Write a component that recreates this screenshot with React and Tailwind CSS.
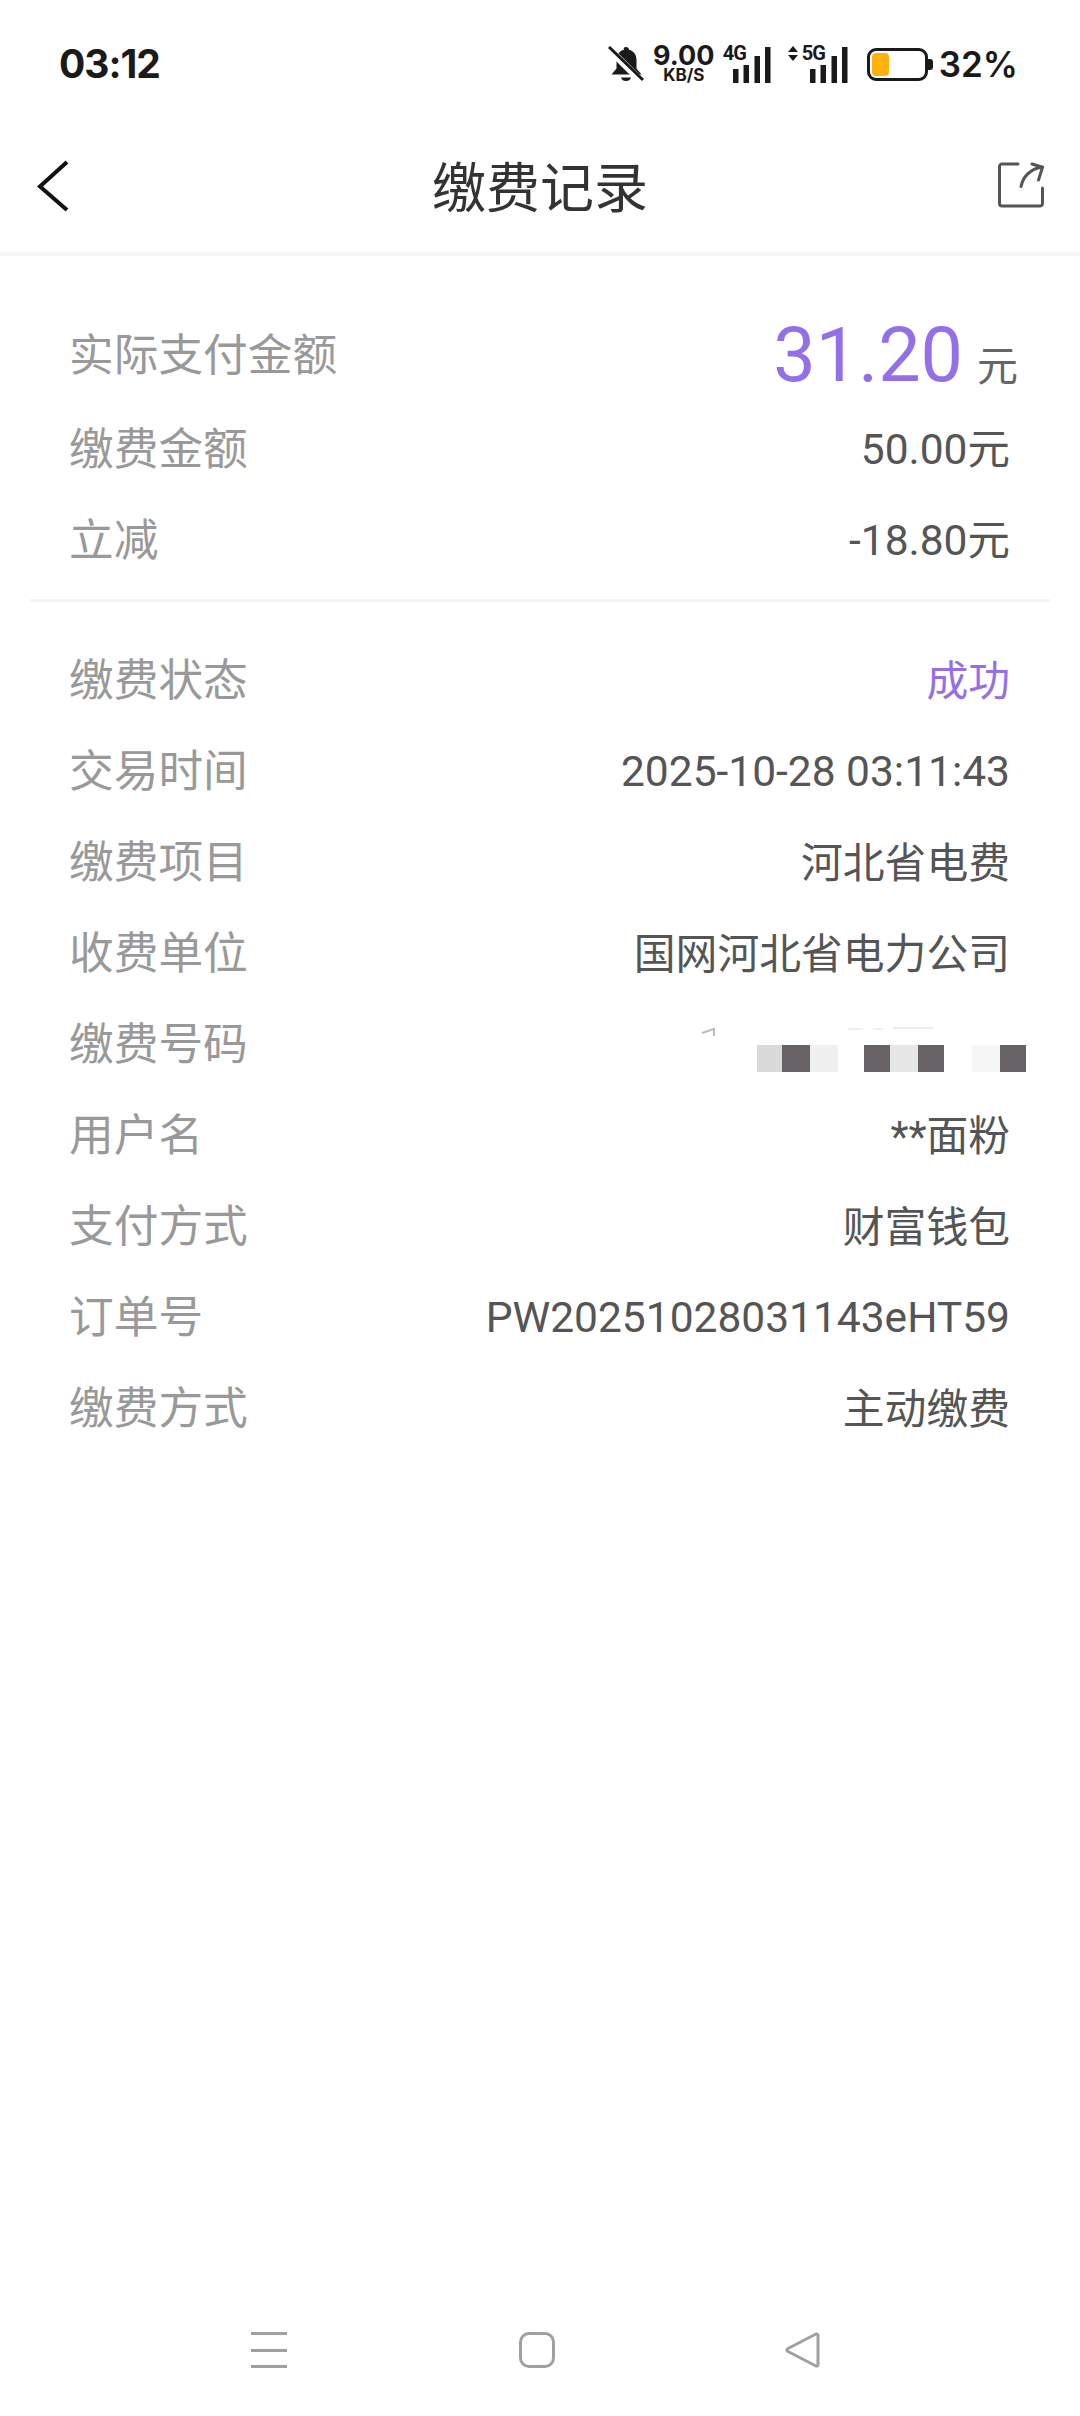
import React from "react";

const CJK = "font-['Roboto','Noto_Sans_CJK_SC',sans-serif]";

const details = [
  { label: "缴费状态", value: "成功", accent: true, han: true },
  { label: "交易时间", value: "2025-10-28 03:11:43" },
  { label: "缴费项目", value: "河北省电费", han: true },
  { label: "收费单位", value: "国网河北省电力公司", han: true },
  { label: "缴费号码", masked: true },
  { label: "用户名", value: "**面粉", han: true },
  { label: "支付方式", value: "财富钱包", han: true },
  { label: "订单号", value: "PW20251028031143eHT59" },
  { label: "缴费方式", value: "主动缴费", han: true },
];

const Signal = ({ className }) => (
  <svg className={className} width="38" height="36" viewBox="0 0 38 36" fill="#1a1a1a">
    <rect x="0" y="22" width="5.500" height="14" />
    <rect x="10.500" y="18" width="5.500" height="18" />
    <rect x="21.500" y="9" width="5.500" height="27" />
    <rect x="32" y="0" width="5.500" height="36" />
  </svg>
);

const StatusBar = () => (
  <div className="flex h-[126px] items-center justify-between pl-[59px] pr-[62px]">
    <span className="font-['Inter',sans-serif] text-[39px] font-bold leading-none tracking-[-1px] text-[#1a1a1a]">03:12</span>
    <div className="flex items-center pt-[2px]">
      <svg width="36" height="36" viewBox="0 0 36 36">
        <path d="M18 1c1.800 0 3 1.200 3 2.800 5 1.300 7.500 5.200 7.500 10.200v8.500l5 6H3.500l5-6V14c0-5 2.500-8.900 7.500-10.200C15 2.200 16.200 1 18 1z" fill="#1a1a1a" />
        <path d="M13 31.500h10q-1 3.500-5 3.500t-5-3.500z" fill="#1a1a1a" />
        <path d="M1 3l33 33" stroke="#fff" strokeWidth="7" />
        <path d="M1 1l34 33" stroke="#1a1a1a" strokeWidth="3" />
      </svg>
      <div className="ml-[10px] flex w-[60px] flex-col items-center font-['Inter',sans-serif] font-bold text-[#1a1a1a]">
        <span className="text-[27px] leading-[22px]">9.00</span>
        <span className="text-[17px] leading-[16px]">KB/S</span>
      </div>
      <div className="relative ml-[9px] h-[38px] w-[48px]">
        <span className="absolute left-0 top-0 font-['Roboto',sans-serif] text-[20px] font-bold leading-[16px] tracking-[-1px] text-[#1a1a1a]">4G</span>
        <Signal className="absolute bottom-0 right-0" />
      </div>
      <div className="relative ml-[17px] h-[38px] w-[60px]">
        <svg className="absolute left-0 top-[1px]" width="10" height="15" viewBox="0 0 10 15" fill="#1a1a1a">
          <path d="M5 0l5 6H0z" />
          <path d="M5 15l5-6H0z" />
        </svg>
        <span className="absolute left-[14px] top-0 font-['Roboto',sans-serif] text-[20px] font-bold leading-[16px] tracking-[-1px] text-[#1a1a1a]">5G</span>
        <Signal className="absolute bottom-0 right-0" />
      </div>
      <div className="ml-[19px] flex items-center">
        <div className="h-[33px] w-[61px] rounded-[9px] border-[3px] border-[#1a1a1a] p-[2px]">
          <div className="h-full w-[17px] rounded-[4px] bg-[#fdb10b]" />
        </div>
        <div className="h-[11px] w-[5px] rounded-r-[3px] bg-[#1a1a1a]" />
      </div>
      <span className="ml-[6px] font-['Inter',sans-serif] text-[35px] font-semibold leading-none text-[#1a1a1a]">32%</span>
    </div>
  </div>
);

const Header = () => (
  <div className="relative flex h-[130px] items-center justify-center border-b-[4px] border-[#f6f6f6]">
    <svg className="absolute left-[36px] top-[34px]" width="34" height="52" viewBox="0 0 34 52" fill="none">
      <path d="M31 2L4 26.500 31 50" stroke="#111" strokeWidth="4" />
    </svg>
    <h1 className={`${CJK} pt-[2px] text-[54px] font-normal leading-none text-[#333]`}>缴费记录</h1>
    <svg className="absolute left-[998px] top-[36px]" width="46" height="46" viewBox="0 0 46 46" fill="none" stroke="#555" strokeWidth="3" strokeLinecap="round" strokeLinejoin="round">
      <path d="M20 2H4a2.500 2.500 0 0 0-2.500 2.500v37A2.500 2.500 0 0 0 4 44h38a2.500 2.500 0 0 0 2.500-2.500V26" />
      <path d="M23 24.500C25 15 32 7 44 5" />
      <path d="M34 2l10.500 3.300L40.500 18" />
    </svg>
  </div>
);

const Row = ({ label, children, valueClass = "text-[42.500px] text-[#555]" }) => (
  <div className={`${CJK} flex h-[91px] items-center justify-between pl-[69px] pr-[70px]`}>
    <span className="text-[44.700px] leading-none text-[#999]">{label}</span>
    <span className={`leading-none ${valueClass}`}>{children}</span>
  </div>
);

// account number is blurred out with mosaic blocks
const MaskedNumber = () => (
  <div className="relative mr-[-16px] mt-[26px] flex h-[27px]">
    <svg className="absolute left-[-56px] top-[-18px]" width="240" height="10" viewBox="0 0 240 10" fill="none">
      <path d="M1 6l12-4v7" stroke="#bbb" strokeWidth="2" />
      <path d="M147 2h15M172 2h10M192 1h40" stroke="#eee" strokeWidth="2" />
    </svg>
    <div className="w-[25px] bg-[#dadada]" />
    <div className="w-[28px] bg-[#666266]" />
    <div className="w-[28px] bg-[#f0f0f0]" />
    <div className="w-[26px]" />
    <div className="w-[26px] bg-[#666266]" />
    <div className="w-[28px] bg-[#e6e6e6]" />
    <div className="w-[26px] bg-[#666266]" />
    <div className="w-[28px]" />
    <div className="w-[28px] bg-[#f6f6f6]" />
    <div className="w-[26px] bg-[#666266]" />
  </div>
);

const NavBar = () => (
  <div className="mt-auto flex h-[84px] items-start pb-[48px]">
    <div className="ml-[251px] flex h-[36px] w-[36px] flex-col justify-between">
      <div className="h-[3px] bg-[#a0a0a0]" />
      <div className="h-[3px] bg-[#a0a0a0]" />
      <div className="h-[3px] bg-[#a0a0a0]" />
    </div>
    <div className="ml-[232px] h-[36px] w-[36px] rounded-[10px] border-[3px] border-[#a0a0a0]" />
    <svg className="ml-[230px]" width="36" height="36" viewBox="0 0 36 36" fill="none">
      <path d="M31 2L3 16.500q-2 1.500 0 3L31 34q2 .5 2-1.500v-29Q33 1.500 31 2z" stroke="#a0a0a0" strokeWidth="3" strokeLinejoin="round" />
    </svg>
  </div>
);

export default function App() {
  return (
    <div className="flex min-h-screen flex-col bg-white">
      <StatusBar />
      <Header />

      <div className={`${CJK} mt-[51px] flex h-[98px] items-center justify-between pl-[69px] pr-[62px]`}>
        <span className="text-[44.700px] leading-none text-[#999]">实际支付金额</span>
        <div className="flex items-baseline">
          <span className="text-[75.500px] leading-none text-[#9370e8]">31.20</span>
          <span className="ml-[14px] text-[41px] leading-none text-[#666]">元</span>
        </div>
      </div>
      <Row label="缴费金额">50.00元</Row>
      <Row label="立减">-18.80元</Row>

      <div className="mx-[30px] mt-[12px] h-[3px] bg-[#f4f4f4]" />

      <div className="mt-[34px]">
        {details.map((d) =>
          d.masked ? (
            <Row key={d.label} label={d.label}>
              <MaskedNumber />
            </Row>
          ) : (
            <Row
              key={d.label}
              label={d.label}
              valueClass={
                d.accent
                  ? "text-[41.800px] text-[#9370e8]"
                  : d.han
                  ? "text-[41.800px] text-[#555]"
                  : "text-[42.500px] text-[#555]"
              }
            >
              {d.value}
            </Row>
          )
        )}
      </div>

      <NavBar />
    </div>
  );
}
